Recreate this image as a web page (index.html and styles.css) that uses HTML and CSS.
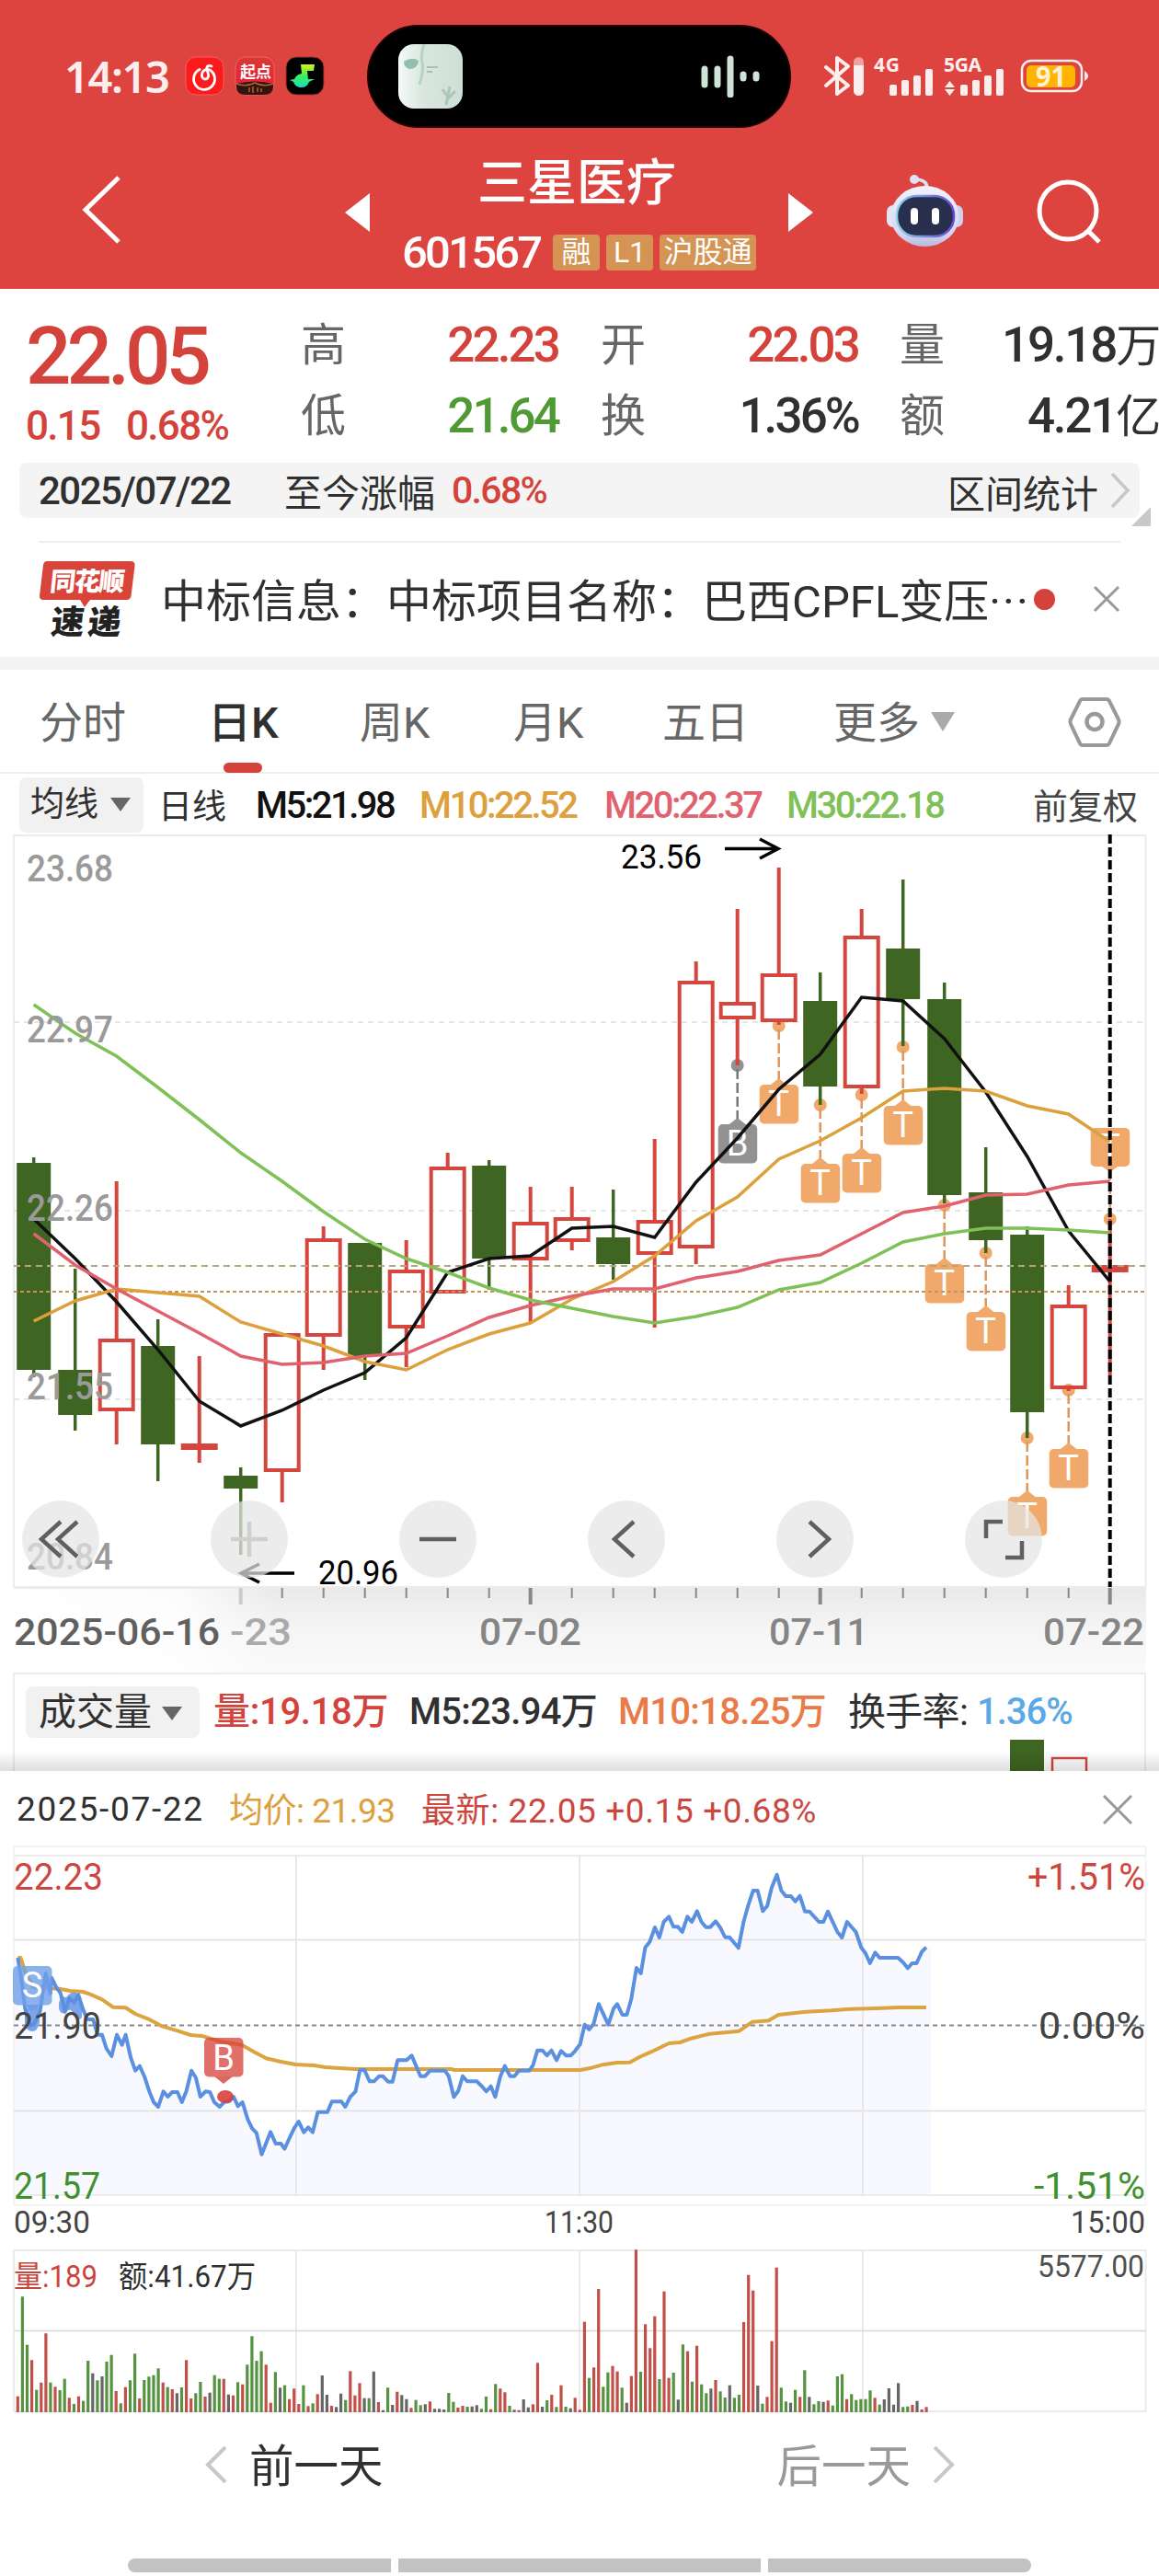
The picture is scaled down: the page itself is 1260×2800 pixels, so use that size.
FILE: index.html
```html
<!DOCTYPE html>
<html lang="zh-CN">
<head>
  <meta charset="UTF-8" />
  <meta name="viewport" content="width=device-width, initial-scale=1" />
  <title>三星医疗 601567</title>
  <link rel="stylesheet" href="styles.css">
</head>
<body>
  <header class="header">
    <div class="status">
      <span class="clock">14:13</span>
      <svg class="app-icons" width="152" height="44" viewBox="0 0 152 44">
        <defs>
          <linearGradient id="note" x1="0" y1="0" x2="0" y2="1"><stop offset="0" stop-color="#d8f020"/><stop offset=".5" stop-color="#3af05a"/><stop offset="1" stop-color="#18dcc0"/></linearGradient>
          <linearGradient id="book" x1="0" y1="0" x2="0" y2="1"><stop offset="0" stop-color="#d83a34"/><stop offset="1" stop-color="#f0183c"/></linearGradient>
        </defs>
        <rect x="1" y="1" width="41" height="41" rx="11" fill="#fb1a1c" stroke="#f06060"/>
        <path d="M16 14.500a11.500 11.500 0 1 0 11 .5c-4-1.500-8 .5-8.500 4.500-.5 3 1 5.500 3.500 5.500s4-2 3.500-5l-1.500-6c-.5-3 2-4.500 5-3" fill="none" stroke="#fff" stroke-width="2.800" stroke-linecap="round"/>
        <rect x="55" y="1" width="42" height="41" rx="11" fill="url(#book)" stroke="#f06060"/>
        <path d="M56 30q20-5 40 0v3q0 9-10 9H66q-10 0-10-9z" fill="#33140f"/>
        <path d="M56 30q10 4 20-1 10 5 20 1M70 34v5m4-6v7m5-6v5m4-4v4" fill="none" stroke="#a8683a" stroke-width="1.5"/>
        <text x="60" y="23" class="qd">起点</text>
        <rect x="110" y="1" width="41" height="41" rx="11" fill="#000" stroke="#a33"/>
        <path d="M126 9h15l-1 7h-7l1 9h7l-6 3a9 9 0 0 1-17 0l-4-2 5-1q2-5 8-6z" fill="url(#note)"/>
      </svg>
      <div class="island">
        <svg width="70" height="70" viewBox="0 0 70 70">
          <defs><linearGradient id="cover"><stop offset="0" stop-color="#f4faf8"/><stop offset=".4" stop-color="#d8e6de"/><stop offset="1" stop-color="#cfdfd5"/></linearGradient></defs>
          <rect width="70" height="70" rx="17" fill="url(#cover)"/>
          <path d="M28 0q-4 12-2 20t-3 24" fill="none" stroke="#b4d4c6" stroke-width="3"/>
          <path d="M6 19q10-6 16-1-1 9-10 9-6-2-6-8z" fill="#8fc0ae"/>
          <path d="M31 25h12M31 30h6" stroke="#9ab4aa" stroke-width="1.500"/>
          <path d="M52 66l4-20m-3 14l9-9m-9 5l-5-7" stroke="#a9c6b8" stroke-width="3" fill="none"/>
        </svg>
        <svg width="64" height="46" viewBox="0 0 64 46">
          <path d="M4 15v17M18 15v17M32 4v39M46 21v4M60 21v4" stroke="#cfe3d6" stroke-width="7" stroke-linecap="round"/>
        </svg>
      </div>
      <svg class="signals" width="292" height="64" viewBox="0 -10 292 64">
        <path d="M2 12l24 20-12 9V2l12 9L2 32" fill="none" stroke="#fdeeee" stroke-width="4" stroke-linejoin="round" stroke-linecap="round"/>
        <rect x="32" y="1" width="11" height="42" rx="5.5" fill="#f0a09e"/>
        <path d="M32 10h11v27.500a5.500 5.500 0 0 1-11 0z" fill="#fdeeee"/>
        <g fill="#fdeeee">
          <text x="54" y="17" class="net" textLength="28">4G</text>
          <rect x="71" y="31" width="8" height="12" rx="2"/><rect x="84" y="26" width="8" height="17" rx="2"/><rect x="97" y="21" width="8" height="22" rx="2"/><rect x="110" y="14" width="8" height="29" rx="2"/>
          <text x="130" y="17" class="net" textLength="41">5GA</text>
          <path d="M131 34l5.500-7 5.500 7zM131 36h11l-5.500 7z"/>
          <rect x="148" y="31" width="8" height="12" rx="2"/><rect x="161" y="26" width="8" height="17" rx="2"/><rect x="174" y="21" width="8" height="22" rx="2"/><rect x="187" y="14" width="8" height="29" rx="2"/>
          <path d="M283 16q8 5.500 0 11z"/>
        </g>
        <rect x="215" y="5" width="65" height="33" rx="10" fill="none" stroke="#fdeeee" stroke-width="2.500"/>
        <rect x="220" y="10" width="53" height="24" rx="5" fill="#ffb400"/>
        <text x="230" y="33" class="battery" textLength="33" lengthAdjust="spacingAndGlyphs">91</text>
      </svg>
    </div>

    <div class="titlebar">
      <svg class="back" width="46" height="78" viewBox="0 0 46 78"><path d="M43 4L7 39l36 35" fill="none" stroke="#fff" stroke-width="5"/></svg>
      <svg class="prev" width="28" height="42" viewBox="0 0 28 42"><path d="M27 0v42L0 21z" fill="#fff"/></svg>
      <div class="stock">
        <h1>三星医疗</h1>
        <div class="code"><b>601567</b><i>融</i><i class="l1">L1</i><i class="hgt">沪股通</i></div>
      </div>
      <svg class="next" width="28" height="42" viewBox="0 0 28 42"><path d="M0 0v42l27-21z" fill="#fff"/></svg>
      <svg class="robot" width="86" height="80" viewBox="0 0 86 80">
        <defs>
          <linearGradient id="shell" x1="0" y1="0" x2="0" y2="1"><stop offset="0" stop-color="#f2f2fc"/><stop offset=".8" stop-color="#d4d6f0"/><stop offset="1" stop-color="#b8b8dc"/></linearGradient>
          <linearGradient id="rim"><stop offset="0" stop-color="#8ed0e8"/><stop offset="1" stop-color="#6a4ad0"/></linearGradient>
        </defs>
        <path d="M32 6q13 0 13 10" fill="none" stroke="#e0e0f4" stroke-width="3.500"/>
        <circle cx="31" cy="6" r="5" fill="#dfe1f4"/>
        <rect x="1" y="34" width="14" height="24" rx="7" fill="#e4e4f6"/><rect x="70" y="34" width="14" height="24" rx="7" fill="#d0d0ee"/>
        <ellipse cx="42.500" cy="46" rx="37" ry="33" fill="url(#shell)"/>
        <rect x="12" y="24" width="62" height="44" rx="21" fill="#28304e" stroke="url(#rim)" stroke-width="2.500"/>
        <rect x="27" y="37" width="8" height="18" rx="4" fill="#fff"/><rect x="50" y="37" width="8" height="18" rx="4" fill="#fff"/>
      </svg>
      <svg class="search" width="72" height="72" viewBox="0 0 72 72"><circle cx="35" cy="34" r="31" fill="none" stroke="#fff" stroke-width="5"/><path d="M57 56l12 12" stroke="#fff" stroke-width="5"/></svg>
    </div>
  </header>

  <section class="quote">
    <div class="price">
      <strong>22.05</strong>
      <div><span class="chg">0.15</span><span>0.68%</span></div>
    </div>
    <dl class="stats">
      <dt>高</dt><dd class="up">22.23</dd>
      <dt>开</dt><dd class="up">22.03</dd>
      <dt>量</dt><dd>19.18<em>万</em></dd>
      <dt>低</dt><dd class="down">21.64</dd>
      <dt>换</dt><dd>1.36%</dd>
      <dt>额</dt><dd>4.21<em>亿</em></dd>
    </dl>
  </section>

  <div class="range">
    <span class="day">2025/07/22</span><span class="since">至今涨幅</span><span class="up num">0.68%</span>
    <span class="range-stat">区间统计</span>
    <svg width="22" height="40" viewBox="0 0 22 40"><path d="M2 2l17 18L2 38" fill="none" stroke="#c8c8c8" stroke-width="3.500"/></svg>
    <span class="corner"></span>
  </div>

  <div class="news">
    <svg width="106" height="106" viewBox="0 -9 106 106">
      <path d="M9 2h91q5 0 4.500 5l-4 33q-1 4-5 4H56l-6 8-5-8H5q-4 0-4-4L5 6q1-4 4-4z" fill="#d8433a"/>
      <text x="15" y="34" transform="skewX(-6)" class="logo-a" textLength="81">同花顺</text>
      <text x="21" y="81" transform="skewX(-6)" class="logo-b" textLength="76">速递</text>
    </svg>
    <p>中标信息：中标项目名称：巴西CPFL变压<span class="dots">···</span></p>
    <span class="badge"></span>
    <svg class="close" width="30" height="30" viewBox="0 0 30 30"><path d="M2 2l26 26M28 2L2 28" stroke="#999" stroke-width="3"/></svg>
  </div>

  <nav class="tabs">
    <a>分时</a><a class="active">日K</a><a>周K</a><a>月K</a><a>五日</a><a>更多<s class="tri"></s></a>
    <svg width="58" height="54" viewBox="0 0 58 54"><path d="M16 2h26q2 0 3 2l10 20q1 3 0 5L45 50q-1 2-3 2H16q-2 0-3-2L3 29q-1-3 0-5L13 4q1-2 3-2z" fill="none" stroke="#999" stroke-width="4"/><circle cx="29" cy="26.500" r="8.500" fill="none" stroke="#999" stroke-width="4.500"/></svg>
  </nav>

  <div class="ma">
    <span class="chip">均线<s class="tri"></s></span>
    <span class="cn">日线</span>
    <span class="m5">M5:21.98</span><span class="m10">M10:22.52</span><span class="m20">M20:22.37</span><span class="m30">M30:22.18</span>
    <span class="adj">前复权</span>
  </div>

  <div class="kline">
    <svg id="kline" width="1260" height="912" viewBox="0 906 1260 912"></svg>
    <div class="tools">
      <button><svg viewBox="0 0 84 84"><path d="M42 23L21 42l21 19M60 23L39 42l21 19"/></svg></button>
      <button class="off"><svg viewBox="0 0 84 84"><path d="M22 42h40M42 23v38"/></svg></button>
      <button><svg viewBox="0 0 84 84"><path d="M22 42h40"/></svg></button>
      <button><svg viewBox="0 0 84 84"><path d="M50 23L29 42l21 19"/></svg></button>
      <button><svg viewBox="0 0 84 84"><path d="M36 23l21 19-21 19"/></svg></button>
      <button><svg viewBox="0 0 84 84"><path d="M41 23H23v18M62 44v18H44"/></svg></button>
    </div>
  </div>

  <section class="volume">
    <span class="chip">成交量<s class="tri"></s></span>
    <span class="vol up">量:19.18万</span>
    <span class="v5">M5:23.94万</span>
    <span class="v10">M10:18.25万</span>
    <span class="rate">换手率:</span><span class="pct">1.36%</span>
    <svg class="vol-bars" width="90" height="34" viewBox="0 0 90 34"><rect width="37" height="34" fill="#3f6522"/><rect x="46" y="20" width="37" height="20" fill="#fff" stroke="#d0463f" stroke-width="2.500"/></svg>
  </section>

  <section class="sheet">
    <div class="sheet-head">
      <span class="date">2025-07-22</span><span class="avg">均价: 21.93</span><span class="last">最新: 22.05 +0.15 +0.68%</span>
      <svg class="close" width="32" height="32" viewBox="0 0 32 32"><path d="M1 1l30 30M31 1L1 31" stroke="#999" stroke-width="3"/></svg>
    </div>
    <svg id="minute" width="1260" height="640" viewBox="0 2000 1260 640"></svg>
    <div class="pager">
      <span class="day-prev"><svg width="24" height="40" viewBox="0 0 24 40"><path d="M22 1L3 20l19 19" fill="none" stroke="#c8c8c8" stroke-width="4"/></svg>前一天</span>
      <span class="day-next">后一天<svg width="24" height="40" viewBox="0 0 24 40"><path d="M2 1l19 19L2 39" fill="none" stroke="#c8c8c8" stroke-width="4"/></svg></span>
    </div>
    <div class="gesture"><i></i><i class="mid"></i><i></i></div>
  </section>

  <script src="script.js"></script>
</body>
</html>
```
FILE: styles.css
```css
* {
  box-sizing: border-box;
}

body {
  margin: 0;
  width: 1260px;
  height: 2800px;
  overflow: hidden;
  background: #fff;
  color: #303030;
  font-family: Roboto, "Noto Sans CJK SC", sans-serif;
  display: flex;
  flex-direction: column;
}

svg {
  display: block;
  flex: none;
}

.up { color: #d4433b; }
.down { color: #4f9a35; }

.tri {
  display: inline-block;
  border: 11px solid transparent;
  border-top: 15px solid #666;
  border-bottom: 0;
}

/* header */
.header {
  height: 314px;
  background: #dd4440;
  color: #fff;
  flex: none;
}

.status {
  height: 166px;
  padding-left: 70px;
  display: flex;
  align-items: center;
}

.clock {
  width: 131px;
  font-family: "Noto Sans", sans-serif;
  font-size: 47px;
  font-weight: 600;
  letter-spacing: -1.4px;
  color: #fdeeee;
}

.island {
  width: 461px;
  height: 112px;
  margin: 0 36px 0 46px;
  padding: 0 32px;
  border-radius: 56px;
  border: 2px solid #1c0606;
  background: #000;
  display: flex;
  align-items: center;
  justify-content: space-between;
}

.qd { font: 700 17px "Noto Sans CJK SC", sans-serif; fill: #fff; }
.net { font: 700 21px "Noto Sans", sans-serif; }
.battery { font: 700 31px "Noto Sans", sans-serif; fill: #fff2d8; }

.titlebar {
  height: 148px;
  display: flex;
  align-items: flex-start;
}

.back { margin: 23px 0 0 86px; }
.prev { margin: 44px 0 0 243px; }

.stock {
  width: 420px;
  margin-left: 34px;
}

.stock h1 {
  margin: 2px 0 0 82px;
  font-size: 54px;
  font-weight: 500;
  line-height: 64px;
}

.code {
  display: flex;
  align-items: center;
  margin-top: 22px;
  height: 40px;
}

.code b {
  width: 164px;
  font-size: 49px;
  font-weight: 500;
  letter-spacing: -2.8px;
}

.code i {
  width: 51px;
  height: 39px;
  margin-right: 7px;
  border-radius: 4px;
  background: #d69454;
  font-style: normal;
  font-size: 32px;
  line-height: 38px;
  text-align: center;
}

.code .hgt { width: 105px; margin: 0; }
.next { margin-top: 44px; }
.robot { margin: 23px 0 0 78px; }
.search { margin: 29px 0 0 77px; }

/* quote */
.quote {
  height: 189px;
  display: flex;
  flex: none;
}

.price {
  width: 328px;
  padding: 25px 0 0 28px;
  color: #d4433b;
}

.price strong {
  display: block;
  height: 96px;
  font-size: 87px;
  font-weight: 500;
  line-height: 96px;
  letter-spacing: -5px;
}

.price div {
  font-size: 44px;
  line-height: 56px;
  font-weight: 500;
  letter-spacing: -1.7px;
}

.chg { display: inline-block; width: 109px; }

.stats {
  margin: 0;
  width: 932px;
  display: grid;
  grid-template-columns: 97px 182px 47px 97px 182px 46px 97px 184px;
  grid-template-rows: 77px 77px;
  padding-top: 23px;
}

.stats dt {
  font-size: 49px;
  line-height: 77px;
  color: #666;
  margin-left: -1px;
}

.stats dt:nth-of-type(3n + 1) { grid-column: 1; }
.stats dt:nth-of-type(3n + 2) { grid-column: 4; }
.stats dt:nth-of-type(3n) { grid-column: 7; }

.stats dd {
  margin: 0;
  font-size: 53px;
  line-height: 77px;
  font-weight: 500;
  letter-spacing: -2.9px;
  text-align: right;
}

.stats dd:nth-of-type(3n) { margin-left: -20px; letter-spacing: -2.2px; }
.stats dd em { font-style: normal; font-size: 49px; font-weight: 400; }

/* range bar */
.range {
  position: relative;
  height: 60px;
  margin: 0 21px;
  padding: 0 10px 0 21px;
  border-radius: 8px;
  background: #f4f4f4;
  display: flex;
  align-items: center;
  flex: none;
  font-size: 41px;
}

.range .day {
  width: 267px;
  font-size: 42px;
  font-weight: 500;
  letter-spacing: -1.5px;
}

.range .since { width: 182px; }
.range .num { letter-spacing: -1.7px; font-weight: 500; }
.range-stat { margin: 2px 13px 0 auto; }

.corner {
  position: absolute;
  right: -12px;
  bottom: -9px;
  border-left: 21px solid transparent;
  border-bottom: 21px solid #c8c8c8;
}

/* news */
.news {
  height: 126px;
  margin: 25px 42px 0;
  border-top: 2px solid #eee;
  display: flex;
  align-items: center;
  flex: none;
  position: relative;
}

.news p {
  width: 949px;
  margin: -6px 0 0 27px;
  white-space: nowrap;
  font-size: 49px;
}

.dots { letter-spacing: 2px; }

.news .badge {
  width: 23px;
  height: 23px;
  margin-top: -2px;
  border-radius: 50%;
  background: #d4433b;
}

.news .close { margin: -3px 0 0 auto; }

.logo-a { font: 900 28px "Noto Sans CJK SC", sans-serif; fill: #fff; }
.logo-b { font: 900 36px "Noto Sans CJK SC", sans-serif; fill: #222; }

/* tabs */
.tabs {
  height: 127px;
  border-top: 14px solid #f4f4f4;
  border-bottom: 2px solid #eee;
  padding-left: 43px;
  display: grid;
  grid-template-columns: 187px 161px 167px 162px 186px 255px 60px;
  align-items: center;
  flex: none;
  font-size: 47px;
  color: #666;
}

.tabs a { position: relative; line-height: 111px; padding-top: 2px; }
.tabs .active { color: #303030; font-weight: 500; margin-left: -4px; }

.tabs .active::after {
  content: "";
  position: absolute;
  left: 17px;
  bottom: 1px;
  width: 42px;
  height: 11px;
  border-radius: 6px;
  background: #d4433b;
}

.tabs .tri {
  margin-left: 12px;
  border-width: 21px 13px 0;
  border-top-color: #aaa;
  vertical-align: 7px;
}

/* moving averages */
.ma {
  height: 65px;
  padding: 3px 23px 0 21px;
  display: flex;
  align-items: center;
  flex: none;
  font-size: 37px;
}

.chip {
  background: #f1f1f1;
  border-radius: 8px;
  height: 60px;
  line-height: 60px;
  width: 135px;
  padding-left: 12px;
}

.ma .tri { margin-left: 13px; vertical-align: 5px; }
.ma .cn { margin: -3px 0 0 16px; width: 106px; }

.m5, .m10, .m20, .m30 {
  font-size: 40px;
  font-weight: 500;
  letter-spacing: -2.5px;
}

.m5 { width: 178px; color: #111; }
.m10 { width: 201px; color: #dca03c; }
.m20 { width: 198px; color: #e0626f; }
.m30 { color: #7fc057; }
.adj { margin: -4px 0 0 auto; font-size: 38px; color: #444; }

/* k-line */
.kline {
  position: relative;
  height: 912px;
  flex: none;
}

.tools {
  position: absolute;
  left: 24px;
  top: 725px;
  display: flex;
  gap: 121px;
}

.tools button {
  width: 84px;
  height: 84px;
  padding: 0;
  border: 0;
  border-radius: 50%;
  background: rgba(229, 229, 229, 0.72);
}

.tools path {
  fill: none;
  stroke: #606060;
  stroke-width: 4.5;
}

.tools .off path { stroke: #cfcfcf; }

.axis { font-size: 41px; font-weight: 500; fill: #9a9a9a; }
.hl { font-size: 37px; fill: #000; }
.tag { font-size: 38px; fill: #fff; text-anchor: middle; }

/* volume */
.volume {
  position: relative;
  height: 107px;
  margin: 0 14px;
  padding: 13px 0 0 14px;
  border: 2px solid #ededed;
  border-width: 2px 2px 0;
  display: flex;
  align-items: flex-start;
  flex: none;
  white-space: nowrap;
  font-size: 40px;
  line-height: 56px;
}

.volume::after {
  content: "";
  position: absolute;
  left: -16px;
  right: -16px;
  bottom: 0;
  height: 22px;
  background: linear-gradient(rgba(0, 0, 0, 0), rgba(0, 0, 0, 0.13));
}

.volume span { font-weight: 500; letter-spacing: -0.7px; }

.volume .chip {
  width: 189px;
  height: 56px;
  line-height: 56px;
  padding-left: 14px;
  margin: 0 15px 0 -2px;
  font-weight: 400;
  font-size: 41px;
  letter-spacing: 0;
}

.volume .tri { margin-left: 11px; vertical-align: 5px; }
.volume .vol { width: 213px; letter-spacing: -0.3px; }
.volume .v5 { width: 227px; }
.volume .v10 { width: 250px; color: #ea7a48; }
.volume .rate { width: 140px; font-weight: 400; font-size: 41px; }
.volume .pct { color: #5aa8e6; letter-spacing: -1px; }

.vol-bars {
  position: absolute;
  left: 1082px;
  bottom: 0;
}

/* intraday sheet */
.sheet {
  flex: none;
  height: 875px;
  background: #fff;
}

.sheet-head {
  height: 75px;
  padding: 8px 29px 0 18px;
  display: flex;
  align-items: center;
  font-size: 37px;
}

.sheet-head .date { width: 231px; letter-spacing: 1.7px; }
.sheet-head .avg { width: 209px; margin-top: -4px; color: #dca03c; letter-spacing: -0.5px; }
.sheet-head .last { margin-top: -4px; color: #cc4640; letter-spacing: 0.6px; }
.sheet-head .close { margin-left: auto; }

.p { font-size: 40px; }
.time { font-size: 33px; fill: #444; }
.v { font-size: 33px; }

.pager {
  display: flex;
  height: 74px;
  align-items: center;
  font-size: 48.5px;
}

.pager span { display: flex; align-items: center; }
.pager svg { margin-top: 4px; }
.day-prev { margin-left: 223px; gap: 24px; }
.day-next { margin-left: 428px; gap: 24px; color: #999; }

.gesture {
  margin: 67px 139px 0;
  display: flex;
  gap: 8px;
}

.gesture i {
  width: 286px;
  height: 15px;
  background: #c2c2c2;
  border-radius: 8px 0 0 8px;
}

.gesture .mid { width: 394px; border-radius: 0; }
.gesture i:last-child { border-radius: 0 8px 8px 0; }
```
FILE: script.js
```js
const RED = "#d4463e", GREEN = "#3f6522";
const cx = i => 36.7 + 45 * i;

// [up, high, bodyTop, bodyBottom, low]
const candles = [
  [0, 1258, 1264, 1489, 1497], [0, 1379, 1489, 1538, 1555], [1, 1284, 1457, 1532, 1570],
  [0, 1434, 1463, 1570, 1610], [1, 1474, 1571, 1574, 1590], [0, 1595, 1604, 1618, 1690],
  [1, 1451, 1451, 1598, 1633], [1, 1333, 1348, 1451, 1489], [0, 1351, 1351, 1474, 1500],
  [1, 1348, 1382, 1442, 1486], [1, 1253, 1270, 1404, 1404], [0, 1261, 1267, 1368, 1402],
  [1, 1290, 1330, 1368, 1437], [1, 1290, 1325, 1348, 1359], [0, 1293, 1345, 1374, 1391],
  [1, 1238, 1328, 1362, 1443], [1, 1045, 1068, 1355, 1374], [1, 988, 1091, 1106, 1158],
  [1, 943, 1060, 1109, 1114], [0, 1057, 1088, 1181, 1201], [1, 988, 1019, 1181, 1189],
  [0, 956, 1031, 1086, 1137], [0, 1068, 1086, 1299, 1308], [0, 1247, 1296, 1348, 1362],
  [0, 1333, 1342, 1535, 1563], [1, 1397, 1420, 1508, 1512], [1, 1325, 1377, 1381, 1495]
];

const averages = {
  "#111": [1325, 1368, 1415, 1467, 1523, 1550, 1533, 1511, 1492, 1454, 1383, 1368, 1365, 1335, 1333, 1345, 1285, 1237, 1184, 1146, 1084, 1088, 1129, 1187, 1257, 1338, 1393],
  "#dca03c": [1436, 1414, 1401, 1405, 1409, 1437, 1450, 1463, 1480, 1489, 1467, 1450, 1438, 1412, 1393, 1365, 1327, 1301, 1260, 1240, 1215, 1186, 1183, 1186, 1202, 1211, 1241],
  "#e0626f": [1341, 1375, 1401, 1425, 1449, 1474, 1483, 1481, 1474, 1471, 1452, 1432, 1419, 1409, 1401, 1401, 1389, 1382, 1370, 1364, 1341, 1318, 1311, 1299, 1298, 1288, 1284],
  "#7fc057": [1092, 1123, 1148, 1182, 1217, 1253, 1284, 1317, 1347, 1368, 1383, 1400, 1413, 1422, 1431, 1438, 1431, 1421, 1402, 1394, 1373, 1350, 1341, 1335, 1335, 1337, 1340]
};

// [index, letter, dotY]
const marks = [
  [17, "B", 1158], [18, "T", 1115], [19, "T", 1201], [20, "T", 1190], [21, "T", 1138],
  [22, "T", 1310], [23, "T", 1362], [24, "T", 1563], [25, "T", 1511]
];

function line(x1, y1, x2, y2, color, w, dash) {
  return `<line x1="${x1}" y1="${y1}" x2="${x2}" y2="${y2}" stroke="${color}" stroke-width="${w}"${dash ? ` stroke-dasharray="${dash}"` : ""}/>`;
}

function text(x, y, len, cls, str, fill, end) {
  return `<text x="${x}" y="${y}" class="${cls}" textLength="${len}" lengthAdjust="spacingAndGlyphs"${end ? ' text-anchor="end"' : ""}${fill ? ` style="fill:${fill}"` : ""}>${str}</text>`;
}

function drawKline() {
  let s = `<defs>
    <linearGradient id="ax" x1="0" y1="0" x2="0" y2="1"><stop offset="0" stop-color="#e9e9e9"/><stop offset=".5" stop-color="#f5f5f5"/><stop offset="1" stop-color="#fafafa"/></linearGradient>
    <linearGradient id="fade"><stop offset="0" stop-color="#fff"/><stop offset=".65" stop-color="#fff" stop-opacity=".85"/><stop offset="1" stop-color="#fff" stop-opacity="0"/></linearGradient></defs>`;
  s += `<rect x="15" y="1725" width="1231" height="93" fill="url(#ax)"/>`;
  s += `<rect x="15" y="908" width="1230.500" height="817" fill="#fff" stroke="#ececec" stroke-width="2"/>`;
  [1111, 1316, 1521].forEach(y => s += line(15, y, 1245, y, "#dedede", 1.3, "6 5"));

  marks.forEach(([i, c, y]) => {
    const x = cx(i), col = c === "B" ? "#929292" : "#f0a96a";
    s += `<circle cx="${x}" cy="${y}" r="7" fill="${col}"/>` + line(x, y + 4, x, y + 60, c === "B" ? "#777" : "#e0955a", 2.5, "11 4");
    s += `<path d="M${x - 10} ${y + 65}l10 -8 10 8z" fill="${col}"/><rect x="${x - 21}" y="${y + 64}" width="42.500" height="42.500" rx="5" fill="${col}"/>`;
    s += `<text x="${x}" y="${y + 98}" class="tag">${c}</text>`;
  });
  // today's tag sits above its candle
  const tx = cx(26);
  s += `<rect x="${tx - 21}" y="1226" width="42.500" height="42" rx="5" fill="#f0a96a"/><path d="M${tx - 10} 1267h20l-10 7z" fill="#f0a96a"/><text x="${tx}" y="1260" class="tag">T</text>`;
  s += line(tx, 1272, tx, 1322, "#e0955a", 2.5, "11 4") + `<circle cx="${tx}" cy="1325" r="7" fill="#f0a96a"/>`;

  candles.forEach(([up, h, t, b, l], i) => {
    const x = cx(i);
    if (up) {
      s += line(x, h, x, t, RED, 4) + line(x, b, x, l, RED, 4);
      s += `<rect x="${x - 18}" y="${t}" width="36" height="${b - t}" fill="none" stroke="${RED}" stroke-width="4"/>`;
      if (b - t < 5) s += `<rect x="${x - 18}" y="${t}" width="36" height="${b - t}" fill="${RED}"/>`;
    } else {
      s += line(x, h, x, l, GREEN, 3.500);
      s += `<rect x="${x - 18.500}" y="${t}" width="37" height="${b - t}" fill="${GREEN}"/>`;
    }
  });
  s += line(15, 1376, 1245, 1376, "#b8a47c", 2, "7 5") + line(15, 1404, 1245, 1404, "#c8925a", 2, "4 3");

  for (const col in averages) {
    s += `<polyline fill="none" stroke="${col}" stroke-width="3.500" points="${averages[col].map((y, i) => cx(i) + "," + y).join(" ")}"/>`;
  }
  s += line(tx, 907, tx, 1725, "#000", 4, "10 4");

  [["23.68", 958], ["22.97", 1133], ["22.26", 1327], ["21.55", 1521], ["20.84", 1706]].forEach(([t, y]) => s += text(29, y, 94, "axis", t));

  s += text(675, 944, 88, "hl", "23.56") + text(346, 1722, 87, "hl", "20.96");
  s += `<g fill="none" stroke="#000" stroke-width="3.500"><path d="M788 922.500h58M826 912l20 10.500-20 10.500"/><path d="M320 1710h-58M282 1700l-20 10 20 10"/></g>`;

  s += `<rect x="0" y="1727" width="300" height="91" fill="url(#fade)"/>`;
  for (let i = 5; i < 27; i++) {
    const major = [5, 12, 19, 26].includes(i);
    s += line(cx(i), 1726, cx(i), major ? 1744 : 1737, i === 5 ? "#ccc" : "#888", major ? 4 : 2);
  }
  s += text(250, 1788, 67, "axis", "-23", "#aaa") + text(521, 1788, 111, "axis", "07-02", "#858585") + text(836, 1788, 108, "axis", "07-11", "#858585") + text(1244, 1788, 110, "axis", "07-22", "#858585", 1);
  s += text(15, 1788, 224, "axis", "2025-06-16", "#606060");
  document.getElementById("kline").innerHTML = s;
}

const price = "24,684 28,740 34,850 40,905 46,900 54,860 62,735 68,800 70,750 76,780 82,800 88,860 94,815 100,830 106,805 112,850 118,885 126,885 132,935 138,935 144,980 151,1005 158,935 165,968 170,935 177,1010 183,1052 189,1037 196,1075 202,1120 208,1155 214,1170 221,1120 227,1137 233,1122 240,1122 246,1155 252,1120 259,1052 265,1075 271,1137 278,1120 284,1122 290,1155 297,1170 303,1155 310,1152 316,1137 322,1168 328,1155 335,1210 341,1240 347,1255 354,1325 366,1252 373,1290 380,1290 385,1307 391,1275 398,1240 404,1218 411,1253 417,1237 423,1253 430,1187 443,1187 449,1153 462,1153 467,1170 474,1137 481,1120 487,1050 493,1050 500,1087 506,1087 513,1070 518,1070 525,1088 531,1088 538,1018 550,1018 557,1003 563,1037 569,1070 575,1070 582,1052 602,1052 607,1070 614,1138 620,1118 626,1070 632,1087 645,1087 652,1103 658,1120 664,1103 670,1138 677,1070 683,1037 690,1070 696,1070 702,1052 716,1052 721,1035 727,986 734,986 740,1003 746,986 753,1018 759,988 766,1003 772,1003 778,988 785,965 791,902 797,918 803,900 810,835 823,902 830,850 835,835 842,870 848,870 854,820 861,717 867,735 873,650 879,632 886,585 892,618 898,567 905,550 911,583 917,583 923,600 930,550 936,567 943,532 949,567 955,584 961,584 968,565 974,584 981,617 987,617 999,652 1006,567 1012,515 1019,465 1025,465 1032,532 1038,515 1044,455 1051,413 1057,465 1063,483 1070,483 1076,500 1082,482 1089,533 1095,533 1108,567 1114,567 1120,533 1133,600 1139,618 1146,567 1158,600 1165,650 1171,670 1177,702 1184,667 1190,684 1215,684 1222,700 1228,718 1234,702 1240,702 1247,665 1253,650";
const avg = "24,684 28,684 34,730 45,780 80,785 95,792 112,795 122,803 138,820 153,845 170,847 183,867 200,883 220,908 240,922 258,936 275,940 300,958 327,968 343,990 360,1012 380,1023 400,1032 425,1035 440,1041 480,1047 610,1047 615,1050 785,1050 800,1043 815,1033 835,1026 852,1025 865,1008 880,992 905,963 920,960 935,947 960,932 1000,923 1018,893 1040,889 1053,870 1090,860 1125,856 1150,851 1185,849 1215,846 1253,846";

// one bar a minute: colour letter + height out of 530
const volumes = "r52 g377 g220 r170 g73 r97 r257 g97 r83 g72 g109 r47 g27 r52 g37 g168 k127 g104 k117 g165 g187 r69 g29 r82 g104 g191 r45 g105 g116 g121 g143 r97 g82 r75 k62 g81 r170 r45 g62 g99 r51 k64 g121 g109 r109 k58 r55 g98 r91 g155 g248 g168 g199 r155 r31 g131 k80 g88 r43 r77 r27 g88 r20 g29 r59 k120 k57 r21 k17 k61 g40 r134 r55 r95 k46 g46 k133 r33 k7 g80 k24 r67 k56 k43 r14 g40 g23 k26 r35 k11 k11 k9 g63 g34 r15 r21 g18 k19 k23 g11 g51 r10 g92 r77 r65 g21 k8 r7 k42 k16 r26 r161 k18 g39 r57 g17 r88 g18 k13 r47 r8 r295 g112 r146 r402 g83 g130 r151 r133 g80 k31 r118 r530 g132 r287 r209 r313 g108 r394 r112 g129 k41 g221 r199 g100 r217 g91 g62 k77 r105 g68 g48 k88 g47 g57 r294 r448 r397 k87 g28 r50 r232 r472 g80 g35 k31 g73 r50 g137 k50 g26 g36 k34 r38 g22 g117 g124 r43 g59 g40 g43 g43 g71 r47 g25 k42 k78 k25 k95 g17 g19 r24 k37 r9 r17".split(" ");

function drawMinute() {
  // chart grid units -> page pixels
  const conv = str => str.split(" ").map(p => p.split(",")).map(([x, y]) => (x * 0.80357).toFixed(1) + "," + (1900 + y / 3).toFixed(1)).join(" ");
  const line1 = conv(price);
  let s = `<polygon fill="#f7f9ff" points="15,2386 15,2140 ${line1} 1012,2117 1012,2386"/>`;
  s += `<rect x="15" y="2007" width="1230.500" height="390" fill="none" stroke="#f4f4f4" stroke-width="2"/>`;
  s += line(15, 2017, 1245, 2017, "#ebebeb", 2) + line(15, 2386, 1245, 2386, "#ebebeb", 2);
  s += line(15, 2108.500, 1245, 2108.500, "#dfdfdf", 1.4) + line(15, 2294.500, 1245, 2294.500, "#dfdfdf", 1.4);
  [322, 630, 938].forEach(x => s += line(x, 2017, x, 2387, "#e8e8ea", 2) + line(x, 2446, x, 2621, "#ebebeb", 2));
  s += line(15, 2201.500, 1245, 2201.500, "#888", 1.8, "5 4");
  s += `<polyline fill="none" stroke="#dca440" stroke-width="4" stroke-linejoin="round" points="${conv(avg)}"/>`;
  s += `<g fill="#5b90e0" fill-opacity=".8"><path d="M27 2190q0-8 8-10t8 8v10q-2 10-8 10t-8-8zM64 2177q2-8 8-6 6-8 12-4t5 12v14q-6 6-9-4-4-8-8-2-6 4-8-4z"/></g>`;
  s += `<polyline fill="none" stroke="#5b90e0" stroke-width="4" stroke-linejoin="round" points="${line1}"/>`;
  s += `<rect x="14" y="2137" width="42.500" height="42.500" rx="5" fill="#6f9fe8" fill-opacity=".8"/><path d="M25 2179h20l-10 7z" fill="#6f9fe8"/><text x="35" y="2171" class="tag">S</text>`;
  s += `<rect x="222" y="2215" width="42.500" height="42.500" rx="5" fill="#d84038" fill-opacity=".75"/><path d="M233 2257h20l-10 8z" fill="#dc6660"/><text x="243" y="2250" class="tag">B</text>`;
  s += `<ellipse cx="245" cy="2279" rx="9" ry="7" fill="#d8403c" fill-opacity=".9"/>`;

  s += text(15, 2054, 97, "p", "22.23", "#cc4640") + text(1245, 2054, 128, "p", "+1.51%", "#cc4640", 1);
  s += text(15, 2216, 95, "p", "21.90", "#444") + text(1245, 2216, 116, "p", "0.00%", "#444", 1);
  s += text(15, 2390, 94, "p", "21.57", "#409030") + text(1245, 2390, 121, "p", "-1.51%", "#409030", 1);
  s += text(15, 2427, 83, "time", "09:30") + text(592, 2427, 75, "time", "11:30") + text(1245, 2427, 81, "time", "15:00", "", 1);

  s += `<rect x="15" y="2446" width="1230.500" height="175" fill="none" stroke="#ebebeb" stroke-width="2"/>` + line(15, 2533.500, 1245, 2533.500, "#d8d8d8", 1.3);
  const col = { r: "#c2504a", g: "#559340", k: "#666" };
  volumes.forEach((v, i) => {
    const h = v.slice(1) / 3;
    s += `<rect x="${(17.700 + i * 5.092).toFixed(1)}" y="${(2622 - h).toFixed(1)}" width="3.200" height="${h.toFixed(1)}" fill="${col[v[0]]}"/>`;
  });
  s += text(15, 2486, 91, "v", "量:189", "#c9463f") + text(129, 2486, 149, "v", "额:41.67万", "#303030") + text(1244, 2475, 116, "v", "5577.00", "#505050", 1);
  document.getElementById("minute").innerHTML = s;
}

drawKline();
drawMinute();
```
